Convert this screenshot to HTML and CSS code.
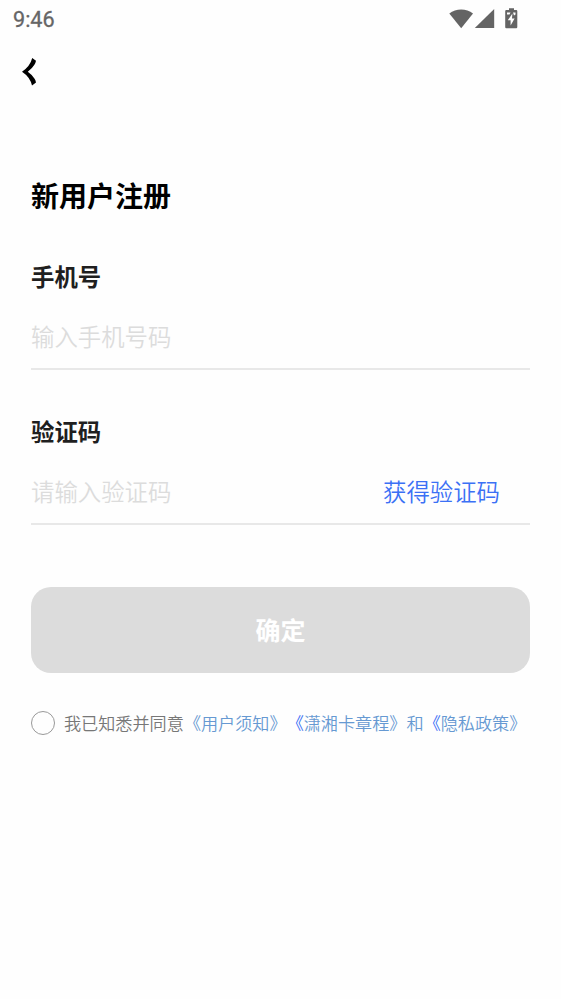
FILE: index.html
```html
<!DOCTYPE html>
<html lang="zh-CN">
<head>
<meta charset="utf-8">
<title>新用户注册</title>
<link rel="stylesheet" href="styles.css">
</head>
<body>
<header class="status">
  <span class="time">9:46</span>
  <svg class="status-icons" width="70" height="22" viewBox="0 0 70 22" fill="#646464">
    <path d="M0.3 5.6C7 .2 17.4.2 24 5.6L12.2 20.2Z"/>
    <path d="M45.2 1V20H25.8Z"/>
    <path d="M60 .2H65V2H67.2Q68.3 2 68.3 3.2V19Q68.3 20.2 67.2 20.2H57.2Q56.2 20.2 56.2 19V3.2Q56.2 2 57.2 2H60Z"/>
    <path fill="#fefefe" d="M58 4.5H61.5L60.5 6.5H58ZM64 4.5H66.5V6.5L65 7.5ZM63.4 5.4L58.8 12.3H61.6V17.4L65.6 10.4H63Z"/>
  </svg>
</header>
<nav class="nav">
  <button class="back" aria-label="返回">
    <svg width="16" height="28" viewBox="0 0 16 28"><path d="M10.2 0L14 2.8Q13.6 5 12.4 6.8Q10 10.8 5.8 13.7Q10 16.6 12.4 20.6Q13.6 22.4 14 24.4L10 27.6Q8.3 19.2 0 13.7Q8.2 8.2 10.2 0Z"/></svg>
  </button>
</nav>
<main class="form">
  <h1 class="title">新用户注册</h1>
  <section class="field">
    <div class="label">手机号</div>
    <div class="row"><span class="placeholder">输入手机号码</span></div>
  </section>
  <section class="field">
    <div class="label">验证码</div>
    <div class="row"><span class="placeholder">请输入验证码</span><a class="get-code">获得验证码</a></div>
  </section>
  <button class="submit">确定</button>
  <div class="agreement">
    <span class="radio"></span>
    <span class="terms">我已知悉并同意<a class="link">《用户须知》</a><a class="link"><span class="open">《</span>潇湘卡章程》</a><a class="link">和<span class="open">《</span>隐私政策》</a></span>
  </div>
</main>
</body>
</html>
```
FILE: styles.css
```css
* { box-sizing: border-box; }
body {
  margin: 0;
  min-height: 999px;
  background: #fefefe;
  font-family: "Noto Sans CJK SC", sans-serif;
  font-weight: 350;
  text-spacing-trim: space-all;
}
button { border: 0; padding: 0; background: none; font-family: inherit; }
.status {
  height: 40px;
  padding: 8px 42px 0 13px;
  display: flex;
  justify-content: space-between;
  align-items: flex-start;
}
.time {
  font: 400 21.6px/24px Roboto, sans-serif;
  color: #666;
  -webkit-text-stroke: 0.3px #666;
}
.nav { height: 62px; padding: 18px 0 0 22px; }
.back, .back svg { display: block; }
.form { padding: 72px 31px 0; }
.title {
  margin: 0;
  font-size: 28px;
  line-height: 42px;
  font-weight: 700;
  color: #000;
}
.field { height: 155px; padding-top: 42px; }
.label {
  font-size: 23.4px;
  line-height: 36px;
  font-weight: 700;
  color: #1f1f1f;
}
.row {
  height: 76px;
  padding: 24px 30px 0 0;
  display: flex;
  justify-content: space-between;
  border-bottom: 2px solid #e8e8e8;
  font-size: 23.4px;
  line-height: 36px;
}
.placeholder { color: #dcdcdc; }
.get-code { color: #3b70f5; }
.submit {
  display: block;
  width: 100%;
  height: 86px;
  margin-top: 61px;
  padding-bottom: 2px;
  border-radius: 20px;
  background: #dcdcdc;
  color: #fff;
  font-size: 25px;
  font-weight: 700;
}
.agreement {
  height: 24px;
  margin-top: 38px;
  display: flex;
  align-items: center;
  gap: 9px;
}
.radio {
  flex: none;
  width: 24px;
  height: 24px;
  border: 1px solid #999;
  border-radius: 50%;
}
.terms {
  font-size: 17.14px;
  line-height: 24px;
  color: #777;
  white-space: nowrap;
}
.link { color: #6699d2; }
.open { color: #3b70f5; }
```
